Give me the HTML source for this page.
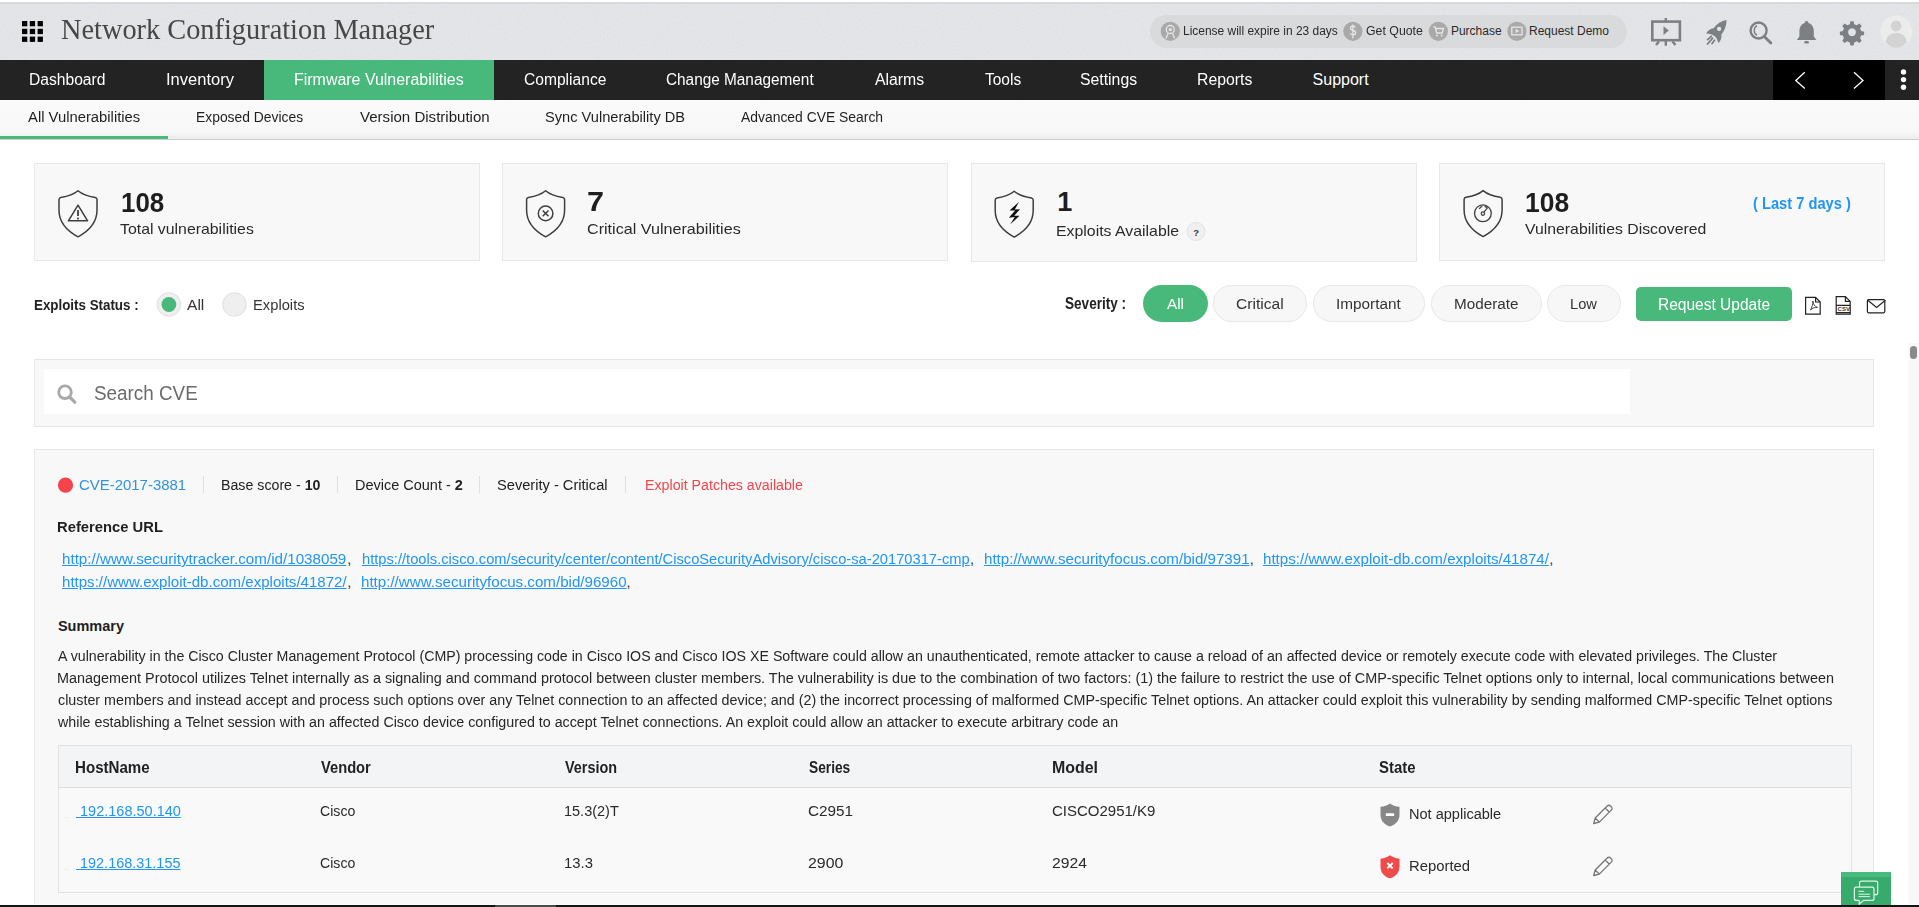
<!DOCTYPE html>
<html><head><meta charset="utf-8">
<style>
html,body{margin:0;padding:0;width:1919px;height:907px;overflow:hidden;background:#fff;}
body{position:relative;font-family:"Liberation Sans",sans-serif;}
.a{position:absolute;box-sizing:border-box;}
.t{position:absolute;white-space:nowrap;transform-origin:0 0;line-height:1;}
svg{position:absolute;overflow:visible;}
</style></head><body>
<!-- header -->
<div class="a" style="left:0;top:2px;width:1919px;height:58px;background:#e4e5e8;border-top:2px solid #d8d9dc;"></div>
<svg style="left:0;top:4px" width="1919" height="56"><filter id="nz" x="0" y="0" width="100%" height="100%"><feTurbulence type="fractalNoise" baseFrequency="0.55" numOctaves="2" seed="3"/><feColorMatrix type="matrix" values="0 0 0 0 0.55  0 0 0 0 0.56  0 0 0 0 0.58  0 0 0 -1.6 1.0"/></filter><rect width="1919" height="56" filter="url(#nz)" opacity="0.2"/></svg>
<svg style="left:0;top:0" width="1" height="1">
 <g fill="#000">
  <rect x="22" y="21" width="5.3" height="5.3"/><rect x="29.8" y="21" width="5.3" height="5.3"/><rect x="37.6" y="21" width="5.3" height="5.3"/>
  <rect x="22" y="28.8" width="5.3" height="5.3"/><rect x="29.8" y="28.8" width="5.3" height="5.3"/><rect x="37.6" y="28.8" width="5.3" height="5.3"/>
  <rect x="22" y="36.6" width="5.3" height="5.3"/><rect x="29.8" y="36.6" width="5.3" height="5.3"/><rect x="37.6" y="36.6" width="5.3" height="5.3"/>
 </g>
</svg>
<div class="a" style="left:1150px;top:15px;width:477px;height:33px;border-radius:17px;background:#d9dadb;"></div>
<svg style="left:0;top:0" width="1" height="1">
 <g fill="#a9a9a9">
  <circle cx="1170.3" cy="31.3" r="9.6"/><circle cx="1352.9" cy="31.3" r="9.6"/><circle cx="1438.4" cy="31.3" r="9.6"/><circle cx="1516.9" cy="31.3" r="9.6"/>
 </g>
 <g fill="none" stroke="#e6e6e6" stroke-width="1.3">
  <circle cx="1170.3" cy="29.5" r="4"/>
  <path d="M1168 33.5 l-2 5 M1172.6 33.5 l2 5"/>
  <path d="M1355.5 27.5 q-1-1.5 -2.6-1.5 q-2.4 0 -2.4 2 q0 1.8 2.6 2.3 q2.6 .5 2.6 2.5 q0 2 -2.6 2 q-1.8 0 -2.8-1.5 M1352.9 24.5 v14"/>
  <path d="M1433.5 27 h1.6 l1.6 6 h5.5 l1.3-4.5 h-7.6"/>
  <rect x="1511.8" y="27.2" width="10.2" height="7.6"/>
 </g>
 <g fill="#e6e6e6"><circle cx="1437" cy="35.6" r="1"/><circle cx="1441.7" cy="35.6" r="1"/><circle cx="1170.3" cy="29.5" r="1.6"/><path d="M1515.6 28.8 l3.6 2.2 -3.6 2.2z"/></g>
</svg>
<!-- header right icons -->
<svg style="left:0;top:0" width="1" height="1">
 <g fill="none" stroke="#7c8084" stroke-width="2.6">
  <rect x="1652.3" y="21.6" width="27.6" height="18.6"/>
 </g>
 <g stroke="#7c8084" stroke-width="2.4" fill="none"><path d="M1665.8 18 v3.5 M1665.8 40 v5.8 M1659 41.5 l-3 3.6 M1672.5 41.5 l3 3.6"/></g>
 <path d="M1663.5 26.3 l5.3 4.3 -5.3 4.3z" fill="#7c8084"/>
 <path fill="#7c8084" d="M1726.6 20 C1726.4 26 1724.5 31 1721.4 34.4 C1721.8 38 1720.6 41 1718.2 43 C1717.8 40.5 1716.8 38.3 1715.3 36.8 C1712.8 34.6 1709.5 33.6 1706.2 33.6 C1707.6 30.6 1710.4 28.6 1713.6 28.2 C1716.8 23.8 1721.2 20.8 1726.6 20z"/>
 <circle cx="1719.1" cy="28.9" r="2.1" fill="#e4e5e7"/>
 <g stroke="#7c8084" stroke-width="1.8" stroke-linecap="round" fill="none"><path d="M1707.6 39.6 L1711.3 36.3 M1707.6 44 L1712.6 38.2 M1712.1 43.5 L1714.5 40.2"/></g>
 <g fill="none" stroke="#7c8084" stroke-width="2.4"><circle cx="1758.6" cy="30.5" r="8"/><path d="M1764.3 36.4 l6.6 6.6" stroke-linecap="round" stroke-width="2.8"/><path d="M1757 25.6 a5.5 5.5 0 0 0 0 9.6" stroke-width="1.4"/></g>
 <g fill="#7c8084"><path d="M1806.6 21 c-1.3 0-1.8 .8-1.9 2 c-3.5 1-5.3 4-5.3 8 v5.5 l-2.6 3.5 h19.6 l-2.6-3.5 v-5.5 c0-4-1.8-7-5.3-8 c-.1-1.2-.6-2-1.9-2z"/><rect x="1804.3" y="41" width="4.6" height="2.6" rx="1.2"/></g>
 <g transform="translate(1852,32.2)"><path fill="#7c8084" fill-rule="evenodd" d="M-1.6 -11 h3.2 l.6 3 a8 8 0 0 1 2.6 1.1 l2.6-1.7 2.3 2.3-1.7 2.6 a8 8 0 0 1 1.1 2.6 l3 .6 v3.2 l-3 .6 a8 8 0 0 1-1.1 2.6 l1.7 2.6-2.3 2.3-2.6-1.7 a8 8 0 0 1-2.6 1.1 l-.6 3 h-3.2 l-.6-3 a8 8 0 0 1-2.6-1.1 l-2.6 1.7-2.3-2.3 1.7-2.6 a8 8 0 0 1-1.1-2.6 l-3-.6 v-3.2 l3-.6 a8 8 0 0 1 1.1-2.6 l-1.7-2.6 2.3-2.3 2.6 1.7 a8 8 0 0 1 2.6-1.1z M0 -4 a4 4 0 1 0 .01 0z"/></g>
 <circle cx="1896.4" cy="31.6" r="16" fill="#ececec"/>
 <circle cx="1896.2" cy="26" r="5.4" fill="#d3d3d3"/>
 <path d="M1885.8 42.4 c0-6 4.5-9.4 10.4-9.4 c5.9 0 10.4 3.4 10.4 9.4 c-2.6 3-6.2 5.3-10.4 5.3 c-4.2 0-7.8-2.3-10.4-5.3z" fill="#d3d3d3"/>
</svg>
<!-- nav -->
<div class="a" style="left:0;top:60px;width:1919px;height:40px;background:#232323;"></div>
<div class="a" style="left:264px;top:60px;width:230px;height:40px;background:#48b97b;"></div>
<div class="a" style="left:1773px;top:60px;width:112px;height:40px;background:#000;"></div>
<svg style="left:0;top:0" width="1" height="1">
 <g fill="none" stroke="#fff" stroke-width="1.3"><path d="M1804.8 72.2 l-9 8.2 9 8.2 M1854 72.2 l9 8.2 -9 8.2"/></g>
 <g fill="#fff"><circle cx="1903.5" cy="72" r="2.7"/><circle cx="1903.5" cy="79.6" r="2.7"/><circle cx="1903.5" cy="87.3" r="2.7"/></g>
</svg>
<!-- subnav -->
<div class="a" style="left:0;top:100px;width:1919px;height:40px;background:linear-gradient(#fafafa 0%,#f8f8f8 80%,#ececec 100%);border-bottom:1px solid #cfcfcf;"></div>
<div class="a" style="left:0;top:136px;width:168px;height:3px;background:#48b97b;"></div>
<!-- cards -->
<div class="a" style="left:34px;top:163px;width:446px;height:98px;background:#f8f8f8;border:1px solid #e8e8e8;"></div>
<div class="a" style="left:502px;top:163px;width:446px;height:98px;background:#f8f8f8;border:1px solid #e8e8e8;"></div>
<div class="a" style="left:971px;top:163px;width:446px;height:99px;background:#f8f8f8;border:1px solid #e8e8e8;"></div>
<div class="a" style="left:1439px;top:163px;width:446px;height:98px;background:#f8f8f8;border:1px solid #e8e8e8;"></div>
<svg style="left:0;top:0" width="1" height="1">
 
 <g fill="none" stroke="#3e3e3e" stroke-width="1.5">
  <path transform="translate(78,213.4)" d="M0 -22.6 C4.2 -19 10 -17 17.2 -15.9 Q19 -15.6 19 -13.8 V-3.2 C19 9.4 11.4 17.2 0 23.4 C-11.4 17.2 -19 9.4 -19 -3.2 V-13.8 Q-19 -15.6 -17.2 -15.9 C-10 -17 -4.2 -19 0 -22.6Z" stroke-linejoin="round" />
  <path transform="translate(545.6,213.4)" d="M0 -22.6 C4.2 -19 10 -17 17.2 -15.9 Q19 -15.6 19 -13.8 V-3.2 C19 9.4 11.4 17.2 0 23.4 C-11.4 17.2 -19 9.4 -19 -3.2 V-13.8 Q-19 -15.6 -17.2 -15.9 C-10 -17 -4.2 -19 0 -22.6Z" stroke-linejoin="round" />
  <path transform="translate(1014.2,213.8)" d="M0 -22.6 C4.2 -19 10 -17 17.2 -15.9 Q19 -15.6 19 -13.8 V-3.2 C19 9.4 11.4 17.2 0 23.4 C-11.4 17.2 -19 9.4 -19 -3.2 V-13.8 Q-19 -15.6 -17.2 -15.9 C-10 -17 -4.2 -19 0 -22.6Z" stroke-linejoin="round" />
  <path transform="translate(1483.1,213.2)" d="M0 -22.6 C4.2 -19 10 -17 17.2 -15.9 Q19 -15.6 19 -13.8 V-3.2 C19 9.4 11.4 17.2 0 23.4 C-11.4 17.2 -19 9.4 -19 -3.2 V-13.8 Q-19 -15.6 -17.2 -15.9 C-10 -17 -4.2 -19 0 -22.6Z" stroke-linejoin="round" />
  <path d="M78 205.2 l-9.6 15.6 h19.2z" stroke-linejoin="round" stroke-width="1.5"/>
  <circle cx="545.6" cy="213.4" r="7.3" stroke-width="1.5"/>
  <path d="M542.7 210.5 l5.8 5.8 M548.5 210.5 l-5.8 5.8" stroke-width="1.5"/>
  <circle cx="1482.9" cy="213.3" r="8.4" stroke-width="1.3"/>
 </g>
 <g fill="#3e3e3e"><rect x="77.1" y="210" width="1.8" height="6"/><rect x="77.1" y="217.6" width="1.8" height="1.8"/></g>
 <path d="M1018.9 202 L1009.5 210.4 L1015.1 210.4 L1008.8 217.7 L1014.8 217.0 L1010.1 224.6 L1019.5 215.8 L1014.2 215.8 L1020.0 209.2 L1014.8 209.5z" fill="#111"/>
 <g fill="none" stroke="#3e3e3e" stroke-width="1.2"><circle cx="1482.9" cy="213.6" r="1.7"/><path d="M1484 212.2 L1487.6 207.6 M1479.3 209 a5 5 0 0 1 3-2.6 M1484.6 206.3 a5 5 0 0 1 3.2 2.2"/></g>
 <circle cx="1196" cy="231.5" r="9" fill="#f0f0f0" stroke="#e2e2e2" stroke-width="1"/>
</svg>
<div class="t" style="left:1193.2px;top:228px;font-size:9.5px;color:#333;font-weight:700">?</div>
<!-- radios -->
<svg style="left:0;top:0" width="1" height="1">
 <circle cx="168.9" cy="304.5" r="11.8" fill="#efefef" stroke="#e0e0e0" stroke-width="1"/>
 <circle cx="168.9" cy="304.5" r="7.4" fill="#48b97b"/>
 <circle cx="234.5" cy="304.5" r="11.8" fill="#efefef" stroke="#e0e0e0" stroke-width="1"/>
</svg>
<!-- severity pills -->
<div class="a" style="left:1143px;top:285px;width:65px;height:37px;border-radius:19px;background:#48b97b;"></div>
<div class="a" style="left:1213px;top:285px;width:94px;height:37px;border-radius:19px;background:#f7f7f7;border:1px solid #e8e8e8;"></div>
<div class="a" style="left:1313px;top:285px;width:112px;height:37px;border-radius:19px;background:#f7f7f7;border:1px solid #e8e8e8;"></div>
<div class="a" style="left:1431px;top:285px;width:111px;height:37px;border-radius:19px;background:#f7f7f7;border:1px solid #e8e8e8;"></div>
<div class="a" style="left:1547px;top:285px;width:74px;height:37px;border-radius:19px;background:#f7f7f7;border:1px solid #e8e8e8;"></div>
<div class="a" style="left:1636px;top:287px;width:156px;height:34px;border-radius:5px;background:#48b97b;"></div>
<svg style="left:0;top:0" width="1" height="1">
 <g fill="none" stroke="#222" stroke-width="1.2">
  <path d="M1805.6 297.4 h10 l4.6 4.6 v12.2 h-14.6z M1815.6 297.4 v4.6 h4.6"/>
  <path d="M1836.2 296.6 h9.2 l4.8 4.8 v12.8 h-14z M1845.4 296.6 v4.8 h4.8"/>
  <rect x="1867.4" y="299.6" width="17.4" height="13.2" rx="1.2"/>
  <path d="M1867.8 300.2 l8.8 7.2 8.8-7.2"/>
  <path d="M1810.5 310 c1.5-2.5 2.5-6 2.4-9 c0 3 2 5.5 4.6 6.5 c-2.5-.3-5.5.6-7 2.5z" stroke="#444" stroke-width="1"/>
 </g>
 <path d="M1836.2 305.4 h14 M1836.2 312.6 h14" stroke="#222" stroke-width="1.1"/>
 <text x="1837.6" y="311.2" font-family="Liberation Sans" font-size="6" font-weight="700" fill="#333">CSV</text>
</svg>
<!-- search box -->
<div class="a" style="left:34px;top:359px;width:1840px;height:68px;background:#f8f8f8;border:1px solid #e6e6e6;"></div>
<div class="a" style="left:44px;top:369px;width:1586px;height:45px;background:#fff;"></div>
<svg style="left:0;top:0" width="1" height="1">
 <circle cx="65" cy="392.2" r="6.3" fill="none" stroke="#a8a8a8" stroke-width="2.8"/>
 <path d="M69.6 397 l5.2 5.2" stroke="#a8a8a8" stroke-width="3.2" stroke-linecap="round"/>
</svg>
<!-- scrollbar -->
<div class="a" style="left:1908px;top:343px;width:11px;height:564px;background:#f8f8f8;"></div>
<div class="a" style="left:1910px;top:346px;width:7px;height:13px;border-radius:4px;background:#8a8a8a;"></div>
<!-- cve container -->
<div class="a" style="left:34px;top:449px;width:1840px;height:470px;background:#f8f8f8;border:1px solid #e6e6e6;"></div>
<svg style="left:0;top:0" width="1" height="1">
 <circle cx="65.5" cy="485.2" r="7.6" fill="#f4434a"/>
 <g stroke="#e0e0e0" stroke-width="1"><path d="M203.5 476 v17 M337.5 476 v17 M479.5 476 v17 M625.5 476 v17"/></g>
</svg>
<!-- table -->
<div class="a" style="left:58px;top:745px;width:1794px;height:148px;background:#f9f9f9;border:1px solid #e2e2e2;"></div>
<div class="a" style="left:59px;top:746px;width:1792px;height:42px;background:#f3f4f6;border-bottom:1px solid #dedede;"></div>
<svg style="left:0;top:0" width="1" height="1">
 
 <path transform="translate(1390,814.4)" d="M0 -11 c-2.5 2-5.5 3-9.5 3.4 v8 c0 6 4 10 9.5 11.6 c5.5-1.6 9.5-5.6 9.5-11.6 v-8 c-4-.4-7-1.4-9.5-3.4z"  fill="#878787"/>
 <rect x="1385.8" y="813.2" width="8.4" height="2.8" fill="#fff" rx=".5"/>
 <path transform="translate(1390,866.3)" d="M0 -11 c-2.5 2-5.5 3-9.5 3.4 v8 c0 6 4 10 9.5 11.6 c5.5-1.6 9.5-5.6 9.5-11.6 v-8 c-4-.4-7-1.4-9.5-3.4z"  fill="#f04a4a"/>
 <path d="M1387.3 863 l5.4 5.4 M1392.7 863 l-5.4 5.4" stroke="#fff" stroke-width="2"/>
 <g fill="none" stroke="#777" stroke-width="1.3" stroke-linejoin="round"><path transform="translate(1602.2,814)" d="M-8.5 9.5 l1.5-5.5 l12-12 a2.2 2.2 0 0 1 3.3 0 l.8 .8 a2.2 2.2 0 0 1 0 3.3 l-12 12z M-7 4 l4 4 M3 -6 l4 4" /><path transform="translate(1602.2,866)" d="M-8.5 9.5 l1.5-5.5 l12-12 a2.2 2.2 0 0 1 3.3 0 l.8 .8 a2.2 2.2 0 0 1 0 3.3 l-12 12z M-7 4 l4 4 M3 -6 l4 4" /></g>
</svg>
<!-- chat button -->
<div class="a" style="left:1841px;top:872px;width:50px;height:33px;background:#37ab6c;border-top:5px solid #47bb7e;"></div>
<svg style="left:0;top:0" width="1" height="1">
 <g fill="none" stroke="#e3f4ea" stroke-width="1.2" stroke-linejoin="round">
  <path d="M1859.5 887.2 v-4 a2 2 0 0 1 2-2 h14.2 a2 2 0 0 1 2 2 v9.5 a2 2 0 0 1-2 2 h-1.7"/>
  <path d="M1856.4 887.2 h15.6 a2 2 0 0 1 2 2 v9.2 a2 2 0 0 1-2 2 h-8.5 l-4.3 3.9 v-3.9 h-2.8 a2 2 0 0 1-2-2 v-9.2 a2 2 0 0 1 2-2z"/>
 </g>
 <path d="M1858.5 891.3 h5.7 M1858.5 894.2 h11.4 M1858.5 896.6 h11.4" stroke="#e3f4ea" stroke-width="1"/>
</svg>
<!-- bottom bar -->
<div class="a" style="left:0;top:904px;width:1841px;height:1px;background:#fff;"></div><div class="a" style="left:1891px;top:904px;width:28px;height:1px;background:#fff;"></div>
<div class="a" style="left:0;top:905px;width:1919px;height:2px;background:#141414;"></div>
<div class="a" style="left:495px;top:905px;width:61px;height:2px;background:#4a4a4a;"></div>
<div class="t" style="left:61.01px;top:15.90px;font-family:'Liberation Serif', serif;font-size:28.5px;font-weight:400;color:#474747;transform:scaleX(0.9947);">Network Configuration Manager</div>
<div class="t" style="left:1182.80px;top:24.75px;font-family:'Liberation Sans', sans-serif;font-size:12px;font-weight:400;color:#2b2b2b;transform:scaleX(0.9961);">License will expire in 23 days</div>
<div class="t" style="left:1366.20px;top:24.75px;font-family:'Liberation Sans', sans-serif;font-size:12px;font-weight:400;color:#2b2b2b;transform:scaleX(1.0273);">Get Quote</div>
<div class="t" style="left:1450.90px;top:24.75px;font-family:'Liberation Sans', sans-serif;font-size:12px;font-weight:400;color:#2b2b2b;">Purchase</div>
<div class="t" style="left:1529.00px;top:24.75px;font-family:'Liberation Sans', sans-serif;font-size:12px;font-weight:400;color:#2b2b2b;">Request Demo</div>
<div class="t" style="left:29.22px;top:72.20px;font-family:'Liberation Sans', sans-serif;font-size:16px;font-weight:400;color:#ffffff;transform:scaleX(0.9766);">Dashboard</div>
<div class="t" style="left:165.87px;top:72.20px;font-family:'Liberation Sans', sans-serif;font-size:16px;font-weight:400;color:#ffffff;transform:scaleX(1.0323);">Inventory</div>
<div class="t" style="left:293.90px;top:72.20px;font-family:'Liberation Sans', sans-serif;font-size:16px;font-weight:400;color:#ffffff;transform:scaleX(0.9970);">Firmware Vulnerabilities</div>
<div class="t" style="left:524.03px;top:72.20px;font-family:'Liberation Sans', sans-serif;font-size:16px;font-weight:400;color:#ffffff;transform:scaleX(0.9747);">Compliance</div>
<div class="t" style="left:665.94px;top:72.20px;font-family:'Liberation Sans', sans-serif;font-size:16px;font-weight:400;color:#ffffff;transform:scaleX(0.9595);">Change Management</div>
<div class="t" style="left:874.60px;top:72.20px;font-family:'Liberation Sans', sans-serif;font-size:16px;font-weight:400;color:#ffffff;transform:scaleX(0.9860);">Alarms</div>
<div class="t" style="left:984.60px;top:72.20px;font-family:'Liberation Sans', sans-serif;font-size:16px;font-weight:400;color:#ffffff;transform:scaleX(0.9676);">Tools</div>
<div class="t" style="left:1079.91px;top:72.20px;font-family:'Liberation Sans', sans-serif;font-size:16px;font-weight:400;color:#ffffff;transform:scaleX(0.9877);">Settings</div>
<div class="t" style="left:1197.21px;top:72.20px;font-family:'Liberation Sans', sans-serif;font-size:16px;font-weight:400;color:#ffffff;transform:scaleX(0.9873);">Reports</div>
<div class="t" style="left:1312.60px;top:72.20px;font-family:'Liberation Sans', sans-serif;font-size:16px;font-weight:400;color:#ffffff;">Support</div>
<div class="t" style="left:27.50px;top:109.00px;font-family:'Liberation Sans', sans-serif;font-size:15.5px;font-weight:400;color:#1f1f1f;transform:scaleX(0.9556);">All Vulnerabilities</div>
<div class="t" style="left:196.01px;top:109.00px;font-family:'Liberation Sans', sans-serif;font-size:15.5px;font-weight:400;color:#1f1f1f;transform:scaleX(0.8950);">Exposed Devices</div>
<div class="t" style="left:360.20px;top:109.00px;font-family:'Liberation Sans', sans-serif;font-size:15.5px;font-weight:400;color:#1f1f1f;transform:scaleX(0.9714);">Version Distribution</div>
<div class="t" style="left:544.76px;top:109.00px;font-family:'Liberation Sans', sans-serif;font-size:15.5px;font-weight:400;color:#1f1f1f;transform:scaleX(0.9435);">Sync Vulnerability DB</div>
<div class="t" style="left:740.70px;top:109.00px;font-family:'Liberation Sans', sans-serif;font-size:15.5px;font-weight:400;color:#1f1f1f;transform:scaleX(0.8962);">Advanced CVE Search</div>
<div class="t" style="left:120.64px;top:189.70px;font-family:'Liberation Sans', sans-serif;font-size:27px;font-weight:700;color:#1e1e1e;transform:scaleX(0.9614);">108</div>
<div class="t" style="left:120.10px;top:220.90px;font-family:'Liberation Sans', sans-serif;font-size:15px;font-weight:400;color:#2a2a2a;transform:scaleX(1.0559);">Total vulnerabilities</div>
<div class="t" style="left:586.87px;top:189.20px;font-family:'Liberation Sans', sans-serif;font-size:27px;font-weight:700;color:#1e1e1e;transform:scaleX(1.1308);">7</div>
<div class="t" style="left:586.92px;top:221.20px;font-family:'Liberation Sans', sans-serif;font-size:15px;font-weight:400;color:#2a2a2a;transform:scaleX(1.0761);">Critical Vulnerabilities</div>
<div class="t" style="left:1057.20px;top:189.20px;font-family:'Liberation Sans', sans-serif;font-size:27px;font-weight:700;color:#1e1e1e;">1</div>
<div class="t" style="left:1055.64px;top:222.70px;font-family:'Liberation Sans', sans-serif;font-size:15px;font-weight:400;color:#2a2a2a;transform:scaleX(1.0565);">Exploits Available</div>
<div class="t" style="left:1525.32px;top:189.90px;font-family:'Liberation Sans', sans-serif;font-size:27px;font-weight:700;color:#1e1e1e;transform:scaleX(0.9795);">108</div>
<div class="t" style="left:1525.00px;top:221.10px;font-family:'Liberation Sans', sans-serif;font-size:15px;font-weight:400;color:#2a2a2a;transform:scaleX(1.0538);">Vulnerabilities Discovered</div>
<div class="t" style="left:1753.28px;top:196.10px;font-family:'Liberation Sans', sans-serif;font-size:16px;font-weight:700;color:#2196f3;transform:scaleX(0.9171);">( Last 7 days )</div>
<div class="t" style="left:33.94px;top:296.50px;font-family:'Liberation Sans', sans-serif;font-size:15.5px;font-weight:700;color:#222;transform:scaleX(0.8613);">Exploits Status :</div>
<div class="t" style="left:187.20px;top:296.50px;font-family:'Liberation Sans', sans-serif;font-size:15px;font-weight:400;color:#333;transform:scaleX(1.0375);">All</div>
<div class="t" style="left:252.72px;top:296.50px;font-family:'Liberation Sans', sans-serif;font-size:15px;font-weight:400;color:#333;transform:scaleX(0.9824);">Exploits</div>
<div class="t" style="left:1064.50px;top:295.70px;font-family:'Liberation Sans', sans-serif;font-size:16px;font-weight:700;color:#222;transform:scaleX(0.8479);">Severity :</div>
<div class="t" style="left:1166.90px;top:296.00px;font-family:'Liberation Sans', sans-serif;font-size:15.5px;font-weight:400;color:#ffffff;transform:scaleX(0.9882);">All</div>
<div class="t" style="left:1235.99px;top:296.00px;font-family:'Liberation Sans', sans-serif;font-size:15.5px;font-weight:400;color:#333;transform:scaleX(1.0065);">Critical</div>
<div class="t" style="left:1336.21px;top:296.00px;font-family:'Liberation Sans', sans-serif;font-size:15.5px;font-weight:400;color:#333;transform:scaleX(0.9892);">Important</div>
<div class="t" style="left:1454.02px;top:296.00px;font-family:'Liberation Sans', sans-serif;font-size:15.5px;font-weight:400;color:#333;transform:scaleX(0.9844);">Moderate</div>
<div class="t" style="left:1570.05px;top:296.00px;font-family:'Liberation Sans', sans-serif;font-size:15.5px;font-weight:400;color:#333;transform:scaleX(0.9464);">Low</div>
<div class="t" style="left:1657.83px;top:296.50px;font-family:'Liberation Sans', sans-serif;font-size:16px;font-weight:400;color:#ffffff;transform:scaleX(0.9693);">Request Update</div>
<div class="t" style="left:94.33px;top:384.00px;font-family:'Liberation Sans', sans-serif;font-size:19.5px;font-weight:400;color:#6b6b6b;transform:scaleX(0.9670);">Search CVE</div>
<div class="t" style="left:79.24px;top:477.10px;font-family:'Liberation Sans', sans-serif;font-size:15.5px;font-weight:400;color:#3093e2;transform:scaleX(0.9636);">CVE-2017-3881</div>
<div class="t" style="left:221.08px;top:477.10px;font-family:'Liberation Sans', sans-serif;font-size:15.5px;font-weight:400;color:#222;transform:scaleX(0.9159);">Base score - <b>10</b></div>
<div class="t" style="left:354.87px;top:477.10px;font-family:'Liberation Sans', sans-serif;font-size:15.5px;font-weight:400;color:#222;transform:scaleX(0.9342);">Device Count - <b>2</b></div>
<div class="t" style="left:496.56px;top:477.10px;font-family:'Liberation Sans', sans-serif;font-size:15.5px;font-weight:400;color:#222;transform:scaleX(0.9440);">Severity - Critical</div>
<div class="t" style="left:644.78px;top:477.10px;font-family:'Liberation Sans', sans-serif;font-size:15.5px;font-weight:400;color:#f3454b;transform:scaleX(0.9164);">Exploit Patches available</div>
<div class="t" style="left:56.85px;top:518.80px;font-family:'Liberation Sans', sans-serif;font-size:15.5px;font-weight:700;color:#1f1f1f;transform:scaleX(0.9536);">Reference URL</div>
<div class="t" style="left:62.40px;top:551.75px;font-family:'Liberation Sans', sans-serif;font-size:14.5px;font-weight:400;color:#2196f3;text-decoration:underline;transform:scaleX(1.0467);">http://www.securitytracker.com/id/1038059</div>
<div class="t" style="left:347.30px;top:551.75px;font-family:'Liberation Sans', sans-serif;font-size:14.5px;font-weight:400;color:#333;">,</div>
<div class="t" style="left:361.60px;top:551.75px;font-family:'Liberation Sans', sans-serif;font-size:14.5px;font-weight:400;color:#2196f3;text-decoration:underline;transform:scaleX(1.0135);">https://tools.cisco.com/security/center/content/CiscoSecurityAdvisory/cisco-sa-20170317-cmp</div>
<div class="t" style="left:969.90px;top:551.75px;font-family:'Liberation Sans', sans-serif;font-size:14.5px;font-weight:400;color:#333;">,</div>
<div class="t" style="left:983.60px;top:551.75px;font-family:'Liberation Sans', sans-serif;font-size:14.5px;font-weight:400;color:#2196f3;text-decoration:underline;transform:scaleX(1.0427);">http://www.securityfocus.com/bid/97391</div>
<div class="t" style="left:1249.70px;top:551.75px;font-family:'Liberation Sans', sans-serif;font-size:14.5px;font-weight:400;color:#333;">,</div>
<div class="t" style="left:1263.10px;top:551.75px;font-family:'Liberation Sans', sans-serif;font-size:14.5px;font-weight:400;color:#2196f3;text-decoration:underline;transform:scaleX(1.0434);">https://www.exploit-db.com/exploits/41874/</div>
<div class="t" style="left:1549.20px;top:551.75px;font-family:'Liberation Sans', sans-serif;font-size:14.5px;font-weight:400;color:#333;">,</div>
<div class="t" style="left:62.40px;top:574.70px;font-family:'Liberation Sans', sans-serif;font-size:14.5px;font-weight:400;color:#2196f3;text-decoration:underline;transform:scaleX(1.0387);">https://www.exploit-db.com/exploits/41872/</div>
<div class="t" style="left:347.20px;top:574.70px;font-family:'Liberation Sans', sans-serif;font-size:14.5px;font-weight:400;color:#333;">,</div>
<div class="t" style="left:360.50px;top:574.70px;font-family:'Liberation Sans', sans-serif;font-size:14.5px;font-weight:400;color:#2196f3;text-decoration:underline;transform:scaleX(1.0427);">http://www.securityfocus.com/bid/96960</div>
<div class="t" style="left:626.60px;top:574.70px;font-family:'Liberation Sans', sans-serif;font-size:14.5px;font-weight:400;color:#333;">,</div>
<div class="t" style="left:57.90px;top:619.00px;font-family:'Liberation Sans', sans-serif;font-size:14.5px;font-weight:700;color:#1f1f1f;">Summary</div>
<div class="t" style="left:57.90px;top:648.70px;font-family:'Liberation Sans', sans-serif;font-size:14px;font-weight:400;color:#262626;transform:scaleX(1.0141);">A vulnerability in the Cisco Cluster Management Protocol (CMP) processing code in Cisco IOS and Cisco IOS XE Software could allow an unauthenticated, remote attacker to cause a reload of an affected device or remotely execute code with elevated privileges. The Cluster</div>
<div class="t" style="left:56.87px;top:670.60px;font-family:'Liberation Sans', sans-serif;font-size:14px;font-weight:400;color:#262626;transform:scaleX(1.0286);">Management Protocol utilizes Telnet internally as a signaling and command protocol between cluster members. The vulnerability is due to the combination of two factors: (1) the failure to restrict the use of CMP-specific Telnet options only to internal, local communications between</div>
<div class="t" style="left:57.90px;top:692.80px;font-family:'Liberation Sans', sans-serif;font-size:14px;font-weight:400;color:#262626;transform:scaleX(1.0208);">cluster members and instead accept and process such options over any Telnet connection to an affected device; and (2) the incorrect processing of malformed CMP-specific Telnet options. An attacker could exploit this vulnerability by sending malformed CMP-specific Telnet options</div>
<div class="t" style="left:57.90px;top:714.50px;font-family:'Liberation Sans', sans-serif;font-size:14px;font-weight:400;color:#262626;transform:scaleX(1.0189);">while establishing a Telnet session with an affected Cisco device configured to accept Telnet connections. An exploit could allow an attacker to execute arbitrary code an</div>
<div class="t" style="left:75.06px;top:760.00px;font-family:'Liberation Sans', sans-serif;font-size:16px;font-weight:700;color:#222;transform:scaleX(0.9436);">HostName</div>
<div class="t" style="left:320.80px;top:760.00px;font-family:'Liberation Sans', sans-serif;font-size:16px;font-weight:700;color:#222;transform:scaleX(0.9185);">Vendor</div>
<div class="t" style="left:565.20px;top:760.00px;font-family:'Liberation Sans', sans-serif;font-size:16px;font-weight:700;color:#222;transform:scaleX(0.9018);">Version</div>
<div class="t" style="left:808.80px;top:760.00px;font-family:'Liberation Sans', sans-serif;font-size:16px;font-weight:700;color:#222;transform:scaleX(0.8583);">Series</div>
<div class="t" style="left:1051.70px;top:760.00px;font-family:'Liberation Sans', sans-serif;font-size:16px;font-weight:700;color:#222;transform:scaleX(0.9955);">Model</div>
<div class="t" style="left:1378.50px;top:760.00px;font-family:'Liberation Sans', sans-serif;font-size:16px;font-weight:700;color:#222;transform:scaleX(0.9308);">State</div>
<div class="t" style="left:75.50px;top:803.00px;font-family:'Liberation Sans', sans-serif;font-size:15px;font-weight:400;color:#2196f3;text-decoration:underline;transform:scaleX(0.9670);">&nbsp;192.168.50.140</div>
<div class="t" style="left:75.50px;top:855.20px;font-family:'Liberation Sans', sans-serif;font-size:15px;font-weight:400;color:#2196f3;text-decoration:underline;transform:scaleX(0.9633);">&nbsp;192.168.31.155</div>
<div class="t" style="left:319.89px;top:803.00px;font-family:'Liberation Sans', sans-serif;font-size:15.5px;font-weight:400;color:#2a2a2a;transform:scaleX(0.9105);">Cisco</div>
<div class="t" style="left:564.26px;top:803.00px;font-family:'Liberation Sans', sans-serif;font-size:15.5px;font-weight:400;color:#2a2a2a;transform:scaleX(0.9351);">15.3(2)T</div>
<div class="t" style="left:807.81px;top:803.00px;font-family:'Liberation Sans', sans-serif;font-size:15.5px;font-weight:400;color:#2a2a2a;transform:scaleX(0.9864);">C2951</div>
<div class="t" style="left:1051.73px;top:803.00px;font-family:'Liberation Sans', sans-serif;font-size:15.5px;font-weight:400;color:#2a2a2a;transform:scaleX(0.9676);">CISCO2951/K9</div>
<div class="t" style="left:1409.26px;top:805.70px;font-family:'Liberation Sans', sans-serif;font-size:15.5px;font-weight:400;color:#2a2a2a;transform:scaleX(0.9381);">Not applicable</div>
<div class="t" style="left:319.89px;top:855.20px;font-family:'Liberation Sans', sans-serif;font-size:15.5px;font-weight:400;color:#2a2a2a;transform:scaleX(0.9105);">Cisco</div>
<div class="t" style="left:564.24px;top:855.20px;font-family:'Liberation Sans', sans-serif;font-size:15.5px;font-weight:400;color:#2a2a2a;transform:scaleX(0.9586);">13.3</div>
<div class="t" style="left:807.78px;top:855.20px;font-family:'Liberation Sans', sans-serif;font-size:15.5px;font-weight:400;color:#2a2a2a;transform:scaleX(1.0242);">2900</div>
<div class="t" style="left:1051.69px;top:855.20px;font-family:'Liberation Sans', sans-serif;font-size:15.5px;font-weight:400;color:#2a2a2a;transform:scaleX(1.0121);">2924</div>
<div class="t" style="left:1409.24px;top:857.90px;font-family:'Liberation Sans', sans-serif;font-size:15.5px;font-weight:400;color:#2a2a2a;transform:scaleX(0.9581);">Reported</div>
</body></html>
